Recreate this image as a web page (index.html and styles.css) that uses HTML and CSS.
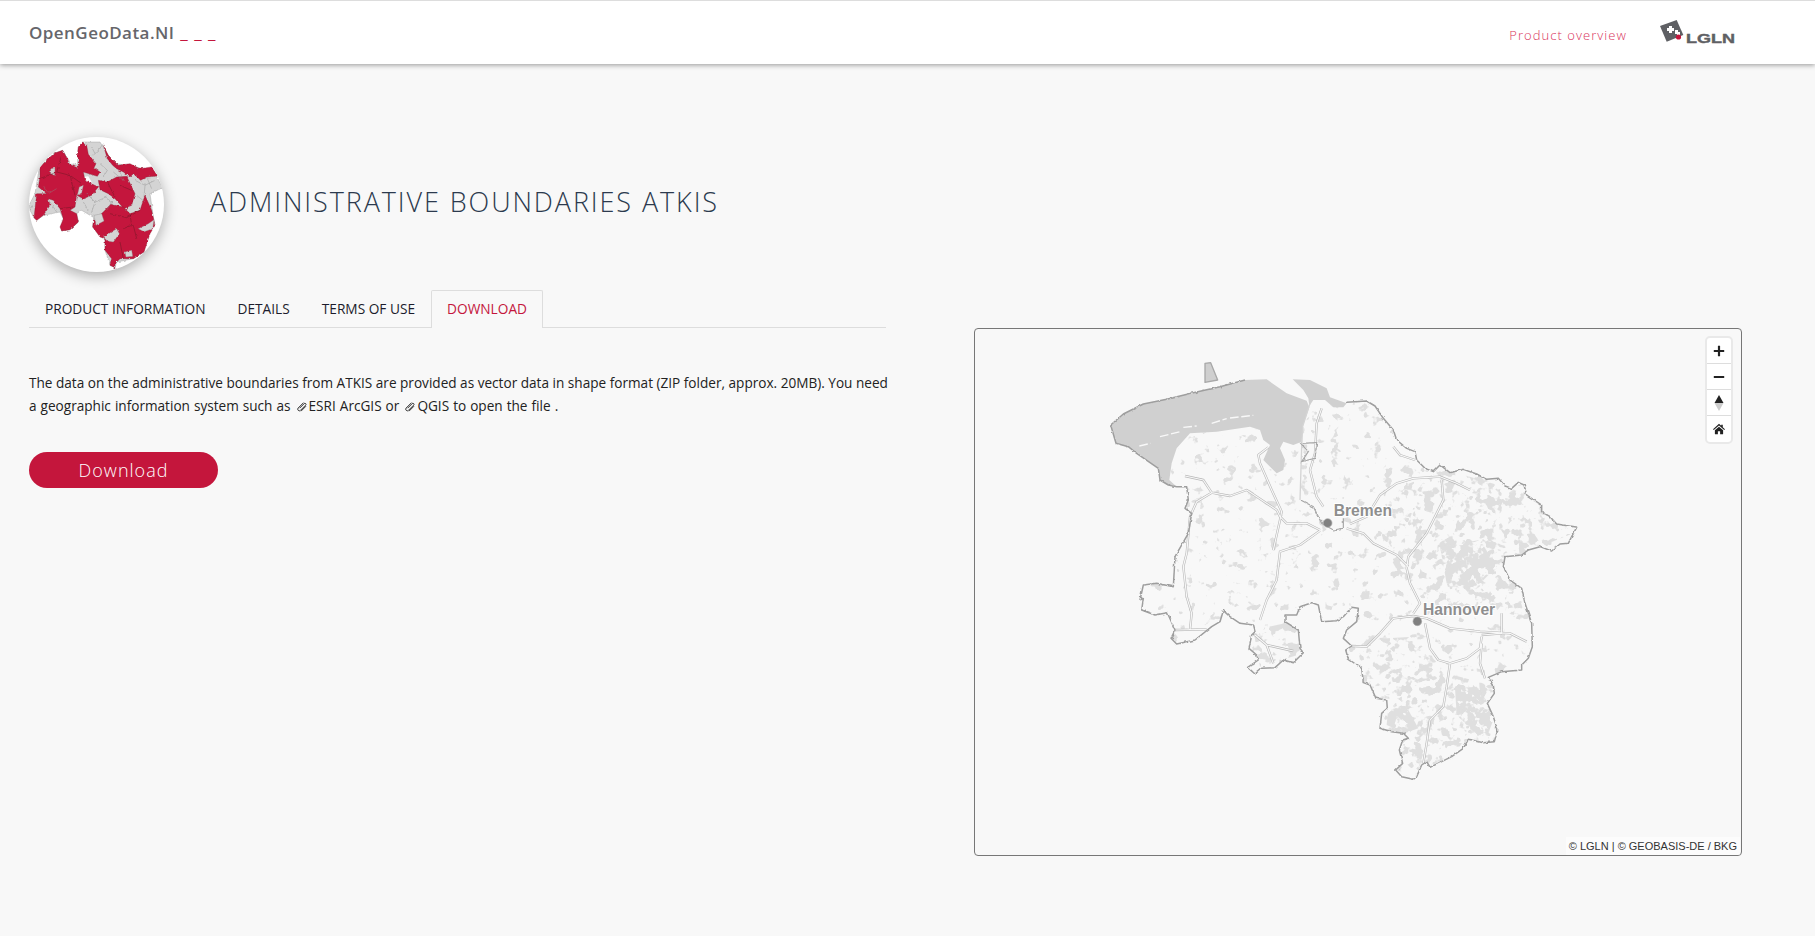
FILE: index.html
```html
<!DOCTYPE html>
<html lang="en">
<head>
<meta charset="utf-8">
<title>OpenGeoData.NI</title>
<link rel="stylesheet" href="styles.css">
</head>
<body>
<header class="topbar">
  <div class="brand">OpenGeoData.NI <span class="brand-dash">_ _ _</span></div>
  <nav class="topnav">
    <a class="overview" href="#">Product overview</a>
    <svg class="lgln" viewBox="0 0 80 26" aria-label="LGLN">
      <polygon points="0,7 16.7,1 23.3,16 6.7,22.7" fill="#5f6064"/>
      <path d="M9 7h3v2h2v3h-2v2H9v-2H7V9h2zM15 11h3v2h2v3h-3v-1h-2z" fill="#fff"/>
      <circle cx="18.5" cy="18" r="2.6" fill="#c4163c"/>
      <text class="lgln-text" x="26" y="24" textLength="49" lengthAdjust="spacingAndGlyphs">LGLN</text>
    </svg>
  </nav>
</header>

<main class="page">
  <section class="content">
    <div class="hero">
      <div class="thumb">
        <svg viewBox="27 20 405 405" class="thumb-map">
          <defs>
            <filter id="rough" x="-5%" y="-5%" width="110%" height="110%">
              <feTurbulence type="fractalNoise" baseFrequency="0.1" numOctaves="2" seed="3"/>
              <feDisplacementMap in="SourceGraphic" scale="8" xChannelSelector="R" yChannelSelector="G"/>
            </filter>
          </defs>
          <g filter="url(#rough)">
            <polygon class="t-gray" points="27,225 45,190 58,110 100,70 128,60 150,95 172,105 175,50 188,35 240,35 265,75 290,100 400,120 428,172 390,190 400,260 405,285 375,310 372,365 340,385 290,395 285,412 270,405 255,360 255,330 218,290 222,262 185,240 170,250 175,275 150,298 125,302 130,265 120,245 70,255 50,270 42,262 30,240"/>
            <polygon class="t-white" points="185,140 205,138 218,160 200,158"/>
            <polygon class="t-white" points="150,85 165,88 160,100 150,100"/>
            <polygon class="t-red" points="60,110 85,85 105,68 128,60 142,85 148,102 172,112 178,100 172,72 175,50 188,35 200,45 205,72 228,100 222,112 240,125 232,138 190,125 195,150 218,162 235,170 215,195 190,205 170,195 165,230 150,240 170,250 175,275 150,298 125,302 120,290 130,265 120,235 100,210 85,205 90,225 70,255 50,270 42,262 45,235 50,190 80,190 55,170 60,140"/>
            <polygon class="t-gray" points="92,115 105,113 104,135 92,132"/>
            <polygon class="t-gray" points="178,170 190,165 185,188 172,195"/>
            <polygon class="t-red" points="250,45 265,75 275,85 295,105 330,100 360,115 395,110 412,137 380,140 362,150 340,130 330,140 310,125 290,115 278,105 262,85"/>
            <polygon class="t-red" points="235,150 262,155 290,140 320,138 345,190 335,225 312,235 285,205 265,190 240,178"/>
            <polygon class="t-red" points="220,270 250,245 272,222 310,230 330,250 360,240 375,195 395,240 405,285 390,310 372,365 340,385 300,385 285,400 285,412 270,405 275,385 255,360 255,325 240,320 218,290"/>
            <polygon class="t-gray" points="250,320 290,295 298,310 280,335 262,332"/>
            <polygon class="t-gray" points="315,365 335,360 338,378 318,380"/>
            <polygon class="t-gray" points="222,255 245,250 252,272 228,285"/>
            <polygon class="t-gray" points="355,295 385,280 402,268 398,295 372,304"/>
            <path class="t-lines" d="M60 145 110 125 150 135 185 160M110 125 125 75M150 135 165 195M120 235 160 230M270 250 320 262 360 240M310 295 335 285 330 250M300 335 310 385M350 325 340 285M300 165 335 180M262 155 285 200"/>
            <path class="t-cells" d="M240 100 262 120 250 140M280 125 310 150 300 125M345 150 375 165 405 150M375 165 372 200M200 190 225 215 260 200 280 225M225 215 215 245M70 165 85 190 110 175M90 215 110 245M240 55 220 75M250 40 235 60M380 140 395 175M350 195 375 215M190 215 205 240M260 240 275 215M40 225 30 240M215 50 225 70"/>
          </g>
        </svg>
      </div>
      <h1 class="title">ADMINISTRATIVE BOUNDARIES ATKIS</h1>
    </div>

    <ul class="tabs">
      <li class="tab"><a href="#">PRODUCT INFORMATION</a></li>
      <li class="tab"><a href="#">DETAILS</a></li>
      <li class="tab"><a href="#">TERMS OF USE</a></li>
      <li class="tab tab-active"><a href="#">DOWNLOAD</a></li>
    </ul>

    <p class="lead">
      <span class="lead-line">The data on the administrative boundaries from ATKIS are provided as vector data in shape format (ZIP folder, approx. 20MB). You need</span>
      <span class="lead-line lead-line-second">a geographic information system such as
        <a class="ext" href="#"><svg class="link-icon" viewBox="0 0 12 12"><path d="M7.6 1.6 2.2 7a1.6 1.6 0 0 0 2.3 2.3l5.2-5.2a1 1 0 0 0-1.5-1.5L3.6 7.2M5 10.2l5-5"/></svg>ESRI ArcGIS</a> or
        <a class="ext" href="#"><svg class="link-icon" viewBox="0 0 12 12"><path d="M7.6 1.6 2.2 7a1.6 1.6 0 0 0 2.3 2.3l5.2-5.2a1 1 0 0 0-1.5-1.5L3.6 7.2M5 10.2l5-5"/></svg>QGIS</a> to open the file .</span>
    </p>

    <a class="download" href="#">Download</a>
  </section>

  <aside class="map">
    <svg class="map-svg" viewBox="-318 24 2304 1584">
      <defs>
        <clipPath id="land-clip">
          <path d="M800 250 860 243 885 258 910 295 940 330 950 360 980 385 1005 395 1010 420 1035 445 1060 455 1080 435 1110 458 1150 448 1190 462 1220 478 1255 475 1275 498 1295 505 1315 487 1332 495 1340 525 1385 555 1385 575 1410 590 1430 612 1490 622 1475 650 1465 670 1440 672 1415 693 1380 680 1345 690 1325 705 1275 710 1270 740 1290 780 1325 805 1335 850 1355 910 1357 980 1345 1015 1325 1035 1325 1050 1265 1055 1225 1072 1240 1095 1243 1120 1222 1150 1240 1190 1253 1230 1243 1265 1210 1268 1165 1258 1150 1285 1115 1310 1050 1342 1040 1325 1025 1335 1010 1370 1000 1378 965 1370 947 1350 968 1330 958 1290 968 1260 985 1255 970 1240 935 1235 900 1225 905 1180 922 1165 920 1140 888 1135 870 1095 850 1088 845 1045 805 1017 797 990 815 978 790 955 800 930 830 905 835 865 815 862 790 890 770 902 725 905 715 855 695 848 660 860 650 885 615 885 615 905 655 930 660 985 670 998 640 1028 610 1020 585 1043 545 1045 525 1062 503 1042 535 1020 530 1005 507 985 515 945 525 935 520 915 480 910 450 890 430 872 420 905 395 920 345 960 290 972 273 955 285 930 262 878 225 885 185 870 190 835 180 840 190 795 230 790 280 800 285 710 325 640 335 580 315 565 325 540 320 500 290 500 268 480 275 430 290 385 330 340 410 335 510 320 540 330 550 360 570 375 550 420 590 460 610 450 615 420 600 385 610 365 640 375 665 365 665 320 688 262 700 240 735 240 760 262Z"/>
        </clipPath>
        <filter id="forest" filterUnits="userSpaceOnUse" x="-318" y="24" width="2304" height="1584" color-interpolation-filters="sRGB">
          <feTurbulence type="fractalNoise" baseFrequency="0.032" numOctaves="3" seed="11" result="n"/>
          <feColorMatrix in="n" type="matrix" values="0 0 0 0 .875  0 0 0 0 .875  0 0 0 0 .875  14 0 0 0 -8.9" result="b"/>
          <feComposite in="b" in2="SourceAlpha" operator="in"/>
        </filter>
        <filter id="forest-dense" filterUnits="userSpaceOnUse" x="-318" y="24" width="2304" height="1584" color-interpolation-filters="sRGB">
          <feTurbulence type="fractalNoise" baseFrequency="0.032" numOctaves="3" seed="5" result="n"/>
          <feColorMatrix in="n" type="matrix" values="0 0 0 0 .875  0 0 0 0 .875  0 0 0 0 .875  14 0 0 0 -7.7" result="b"/>
          <feComposite in="b" in2="SourceAlpha" operator="in"/>
        </filter>
        <filter id="forest-core" filterUnits="userSpaceOnUse" x="-318" y="24" width="2304" height="1584" color-interpolation-filters="sRGB">
          <feTurbulence type="fractalNoise" baseFrequency="0.035" numOctaves="3" seed="21" result="n"/>
          <feColorMatrix in="n" type="matrix" values="0 0 0 0 .875  0 0 0 0 .875  0 0 0 0 .875  14 0 0 0 -5.8" result="b"/>
          <feComposite in="b" in2="SourceAlpha" operator="in"/>
        </filter>
        <filter id="jag" filterUnits="userSpaceOnUse" x="-318" y="24" width="2304" height="1584">
          <feTurbulence type="fractalNoise" baseFrequency="0.07" numOctaves="2" seed="8"/>
          <feDisplacementMap in="SourceGraphic" scale="9" xChannelSelector="R" yChannelSelector="G"/>
        </filter>
        <path id="road-lines" d="M1170 510 1130 490 1080 470 1000 475 950 490 900 525 860 590 810 612M1085 480 1090 540 1060 600 1040 640 985 710 980 745 990 790 1020 850 1000 880M800 625 850 640 880 670 950 705 985 740M720 630 680 610 620 610 600 590 590 570 500 510 450 528 395 518 350 545 330 590 320 700 310 740 320 830 335 880 330 930M395 518 370 480 315 468M720 632 660 675 600 695 590 780 560 840 540 900M565 382 535 405 540 430 575 510 605 575 600 600 580 690M725 265 710 310 705 400 690 450 710 530 730 560M815 978 860 980 900 940 940 895 1000 888 1040 895 1110 925 1200 935 1290 940 1340 965M1035 910 1050 985 1075 1020 1110 1030 1160 1015 1200 985 1205 950M1110 1030 1100 1100 1090 1160 1050 1200 1040 1270 1030 1330M1205 970 1200 1030 1215 1075M1205 945 1265 940 1265 880M525 945 560 975 640 993M560 975 580 1030M285 930 380 928M940 380 960 405 1005 420"/>
      </defs>

      <g clip-path="url(#land-clip)">
        <rect class="mask" filter="url(#forest)" x="0" y="200" width="1500" height="1200"/>
        <g class="mask" filter="url(#forest-dense)">
          <polygon points="960,500 1100,450 1340,520 1480,640 1280,720 1340,900 1150,830 1100,880 980,800 900,660"/>
          <polygon points="830,960 1000,950 1100,1060 1250,1100 1260,1270 1050,1350 960,1370 900,1200 850,1090"/>
          <polygon points="520,930 660,900 670,1000 540,1040"/>
        </g>
        <g class="mask" filter="url(#forest-core)">
          <polygon points="1125,1105 1190,1100 1225,1150 1240,1200 1225,1240 1180,1235 1130,1185"/>
          <polygon points="925,1160 985,1170 1015,1225 975,1240 920,1215"/>
          <polygon points="1080,680 1200,660 1250,740 1190,800 1100,790"/>
        </g>
      </g>

      <g class="sea">
        <polygon points="92,315 130,282 190,252 260,238 340,218 420,200 495,180 560,178 620,220 680,242 688,262 668,320 665,365 640,375 610,365 600,385 615,420 610,450 590,460 550,420 570,375 550,360 540,330 510,320 410,335 330,340 290,385 275,430 268,480 290,500 265,495 240,480 235,445 170,400 145,380 108,370"/>
        <polygon points="638,178 690,180 740,205 750,232 800,250 790,262 760,262 735,240 700,240 688,258 685,235 670,210"/>
      </g>
      <path class="flecks" d="M178 378 212 370M240 350 300 335M310 322 350 318M395 310 440 296M450 294 520 286"/>
      <polygon class="island" points="375,130 392,128 413,180 375,187"/>

      <g class="roads">
        <use class="road-case" href="#road-lines"/>
        <use class="road-core" href="#road-lines"/>
      </g>
      <path class="river" d="M690 250 668 320 665 380 660 540"/>
      <path class="border-thin" filter="url(#jag)" d="M662 370 710 368 705 415 665 425 685 395ZM662 540 700 560 725 610 760 630 790 625 790 595"/>

      <path class="border" filter="url(#jag)" d="M800 247 860 243 885 258 910 295 940 330 950 360 980 385 1005 395 1010 420 1035 445 1060 455 1080 435 1110 458 1150 448 1190 462 1220 478 1255 475 1275 498 1295 505 1315 487 1332 495 1340 525 1385 555 1385 575 1410 590 1430 612 1490 622 1475 650 1465 670 1440 672 1415 693 1380 680 1345 690 1325 705 1275 710 1270 740 1290 780 1325 805 1335 850 1355 910 1357 980 1345 1015 1325 1035 1325 1050 1265 1055 1225 1072 1240 1095 1243 1120 1222 1150 1240 1190 1253 1230 1243 1265 1210 1268 1165 1258 1150 1285 1115 1310 1050 1342 1040 1325 1025 1335 1010 1370 1000 1378 965 1370 947 1350 968 1330 958 1290 968 1260 985 1255 970 1240 935 1235 900 1225 905 1180 922 1165 920 1140 888 1135 870 1095 850 1088 845 1045 805 1017 797 990 815 978 790 955 800 930 830 905 835 865 815 862 790 890 770 902 725 905 715 855 695 848 660 860 650 885 615 885 615 905 655 930 660 985 670 998 640 1028 610 1020 585 1043 545 1045 525 1062 503 1042 535 1020 530 1005 507 985 515 945 525 935 520 915 480 910 450 890 430 872 420 905 395 920 345 960 290 972 273 955 285 930 262 878 225 885 185 870 190 835 180 840 190 795 230 790 280 800 285 710 325 640 335 580 315 565 325 540 320 500 290 500 265 495 240 480 235 445 170 400 145 380 108 370 92 315 130 282 190 252 260 238 340 218 420 200 495 180"/>

      <circle class="city" cx="743" cy="609" r="13"/>
      <circle class="city" cx="1012" cy="904" r="13"/>
      <text class="city-label" x="761" y="589">Bremen</text>
      <text class="city-label" x="1029" y="884">Hannover</text>
    </svg>

    <div class="controls">
      <button class="ctl" type="button" aria-label="Zoom in"><svg viewBox="0 0 12 12"><path d="M6 .8v10.4M.8 6h10.4" class="ctl-line"/></svg></button>
      <button class="ctl" type="button" aria-label="Zoom out"><svg viewBox="0 0 12 12"><path d="M.8 6h10.4" class="ctl-line"/></svg></button>
      <button class="ctl" type="button" aria-label="Reset bearing"><svg viewBox="0 0 12 16"><polygon points="6,0 10.5,8 1.5,8" class="ctl-fill"/><polygon points="6,16 10.5,8 1.5,8" class="ctl-fade"/></svg></button>
      <button class="ctl" type="button" aria-label="Home"><svg viewBox="0 0 14 12"><path class="ctl-fill" d="M7 0 9.6 2.3V1h1.8v2.9L14 6.2l-.9 1L7 1.9.9 7.2 0 6.2zM2.2 7.6 7 3.5l4.8 4.1V12H8.3V8.6H5.7V12H2.2z"/></svg></button>
    </div>
    <div class="attribution">© LGLN | © GEOBASIS-DE / BKG</div>
  </aside>
</main>
</body>
</html>
```
FILE: styles.css
```css
* { box-sizing: border-box; }
html, body { margin: 0; height: 100%; overflow: hidden; }
body {
  background: #f8f8f8;
  color: #222;
  font-family: "Open Sans", "Liberation Sans", sans-serif;
  font-size: 13px;
}
a { text-decoration: none; color: inherit; }

.topbar {
  height: 64px;
  background: #fff;
  border-top: 1px solid #ddd;
  box-shadow: 0 1px 5px rgba(0, 0, 0, .4);
  display: flex;
  align-items: center;
  justify-content: space-between;
  padding: 0 75px 0 29px;
}
.brand { font-size: 17px; font-weight: 600; color: #66666b; letter-spacing: .45px; }
.brand-dash { color: #c4163c; font-weight: 400; margin-left: 1px; letter-spacing: 1px; }
.topnav { display: flex; align-items: center; gap: 33px; }
.overview { color: #d9345c; font-size: 13px; font-weight: 300; letter-spacing: 1.05px; margin-top: 5px; }
.lgln { width: 80px; height: 26px; display: block; margin-top: -2px; }
.lgln-text { font-family: "Liberation Sans", sans-serif; font-weight: 700; font-size: 13.4px; fill: #5f6064; stroke: #5f6064; stroke-width: .4px; }

.page {
  display: flex;
  justify-content: space-between;
  padding: 73px 73px 0 29px;
}
.content { width: 857px; }

.hero { display: flex; align-items: center; gap: 46px; }
.thumb {
  width: 135px;
  height: 135px;
  border-radius: 50%;
  background: #fff;
  overflow: hidden;
  flex: none;
  box-shadow: 0 4px 14px rgba(0, 0, 0, .3);
}
.thumb-map { display: block; width: 100%; height: 100%; }
.t-gray { fill: #d4d4d4; stroke: #8a8a8a; stroke-width: 1; }
.t-white { fill: #fff; }
.t-red { fill: #c4163c; stroke: #7c1b30; stroke-width: 1; }
.t-lines { fill: none; stroke: #5a1020; stroke-width: 1.2; }
.t-cells { fill: none; stroke: #8a8a8a; stroke-width: 1.2; }

.title {
  margin: 0 0 6px;
  font-size: 27px;
  font-weight: 300;
  letter-spacing: 1.9px;
  color: #2c3a4e;
  white-space: nowrap;
}

.tabs {
  list-style: none;
  margin: 18px 0 0;
  padding: 0;
  height: 38px;
  display: flex;
  border-bottom: 1px solid #ddd;
}
.tab a {
  display: block;
  height: 38px;
  padding: 0 15px;
  line-height: 36px;
  font-size: 13.7px;
  color: #1c1c2c;
  border: 1px solid transparent;
  border-bottom: 0;
}
.tab-active a {
  color: #c4163c;
  background: #f8f8f8;
  border-color: #ddd;
  border-radius: 2px 2px 0 0;
}

.lead {
  margin: 44px -2px 35px 0;
  font-size: 13.6px;
  line-height: 22.5px;
  color: #222;
}
.lead-line { display: block; white-space: nowrap; }
.lead-line-second { word-spacing: .5px; }
.ext { white-space: nowrap; }
.link-icon {
  width: 12px;
  height: 12px;
  vertical-align: -2px;
  margin: 0 1px 0 1px;
  fill: none;
  stroke: #333;
  stroke-width: 1;
}

.download {
  display: block;
  width: 189px;
  height: 36px;
  border-radius: 18px;
  background: #c4163c;
  color: #fff;
  text-align: center;
  font-size: 18px;
  font-weight: 300;
  letter-spacing: 1px;
  line-height: 36px;
}

.map {
  position: relative;
  width: 768px;
  height: 528px;
  margin-top: 191px;
  border: 1px solid #777;
  border-radius: 4px;
  background: #f8f8f8;
  overflow: hidden;
}
.map-svg { display: block; width: 768px; height: 528px; margin: -1px; }

.mask { fill: #000; }
.sea polygon { fill: #d0d0d0; }
.flecks { fill: none; stroke: #f8f8f8; stroke-width: 4; stroke-dasharray: 26 8; }
.island { fill: #cfcfcf; stroke: #a8a8a8; stroke-width: 4; stroke-linejoin: round; }
.road-case { fill: none; stroke: #b8b8b8; stroke-width: 7; stroke-linejoin: round; }
.road-core { fill: none; stroke: #f8f8f8; stroke-width: 3.5; stroke-linejoin: round; }
.river { fill: none; stroke: #d4d4d4; stroke-width: 4; }
.border { fill: none; stroke: #9e9e9e; stroke-width: 4.5; stroke-linejoin: round; }
.border-thin { fill: none; stroke: #a6a6a6; stroke-width: 3.5; }
.city { fill: #808080; stroke: #aaa; stroke-width: 2; }
.city-label {
  font-family: "Liberation Sans", sans-serif;
  font-weight: 700;
  font-size: 47px;
  fill: #8e8e8e;
  stroke: #fff;
  stroke-width: 6px;
  paint-order: stroke;
}

.controls {
  position: absolute;
  top: 7px;
  right: 8px;
  width: 28px;
  background: #fff;
  border: 2px solid #e9e9e9;
  border-radius: 5px;
  display: flex;
  flex-direction: column;
}
.ctl {
  height: 26px;
  padding: 0;
  border: 0;
  border-bottom: 1px solid #ddd;
  background: none;
  display: flex;
  align-items: center;
  justify-content: center;
}
.ctl:last-child { border-bottom: 0; }
.ctl svg { width: 12px; height: 12px; display: block; }
.ctl-line { fill: none; stroke: #222; stroke-width: 2.2; }
.ctl-fill { fill: #222; }
.ctl-fade { fill: #ccc; }
.ctl:nth-child(3) svg { height: 16px; }

.attribution {
  position: absolute;
  right: 1px;
  bottom: 0;
  height: 18px;
  padding: 0 3px 0 3px;
  background: rgba(255, 255, 255, .6);
  font-family: "Liberation Sans", sans-serif;
  font-size: 11px;
  line-height: 18px;
  color: #333;
}
```
